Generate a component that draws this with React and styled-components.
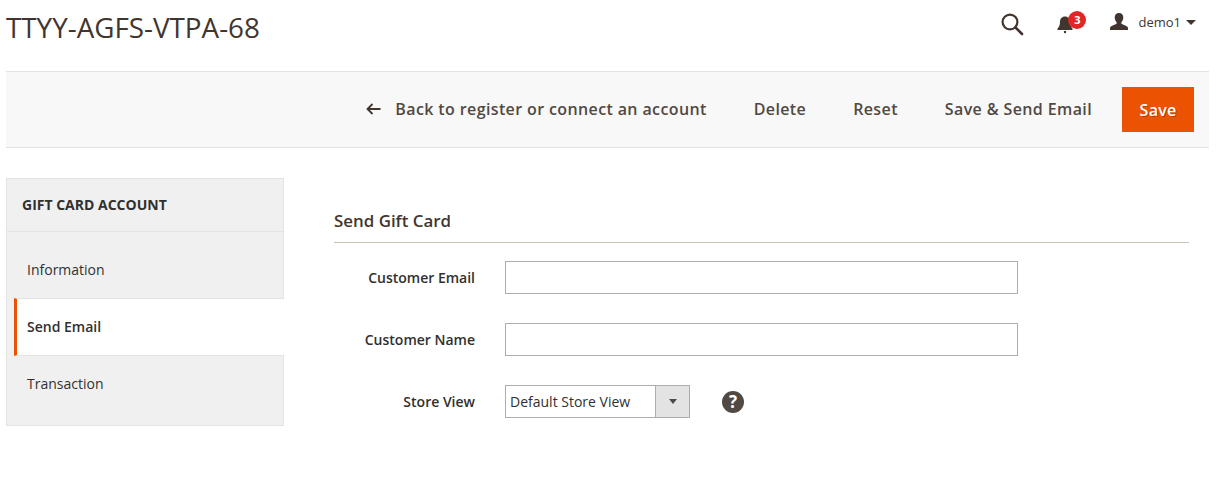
// Import Libraries
import React from 'react'
import styled, { createGlobalStyle } from 'styled-components'

// Style
const GlobalStyle = createGlobalStyle`
    html, body {
        margin: 0;
        padding: 0;
        background: #fff;
        font-family: "Open Sans", sans-serif;
        color: #41362f;
    }
    * {
        box-sizing: border-box;
    }
`

const Page = styled.div`
    width: 1229px;
    height: 490px;
    padding: 0 20px 0 6px;
    overflow: hidden;
`

const Header = styled.header`
    display: flex;
    align-items: flex-start;
    justify-content: space-between;
    height: 71px;
`

const PageTitle = styled.h1`
    margin: 7px 0 0;
    font-size: 27.8px;
    line-height: 40px;
    font-weight: 400;
    color: #41362f;
`

const HeaderActions = styled.div`
    display: flex;
    align-items: flex-start;
    padding: 12px 13px 0 0;
`

const SearchButton = styled.span`
    display: block;
    width: 24px;
    height: 24px;
    margin-right: 32px;
`

const BellButton = styled.span`
    display: block;
    position: relative;
    width: 18px;
    height: 22px;
    margin: 2px 35px 0 0;
`

const Badge = styled.span`
    position: absolute;
    top: -3px;
    left: 12px;
    width: 18px;
    height: 18px;
    border-radius: 50%;
    background: #e22626;
    color: #fff;
    font-size: 11px;
    font-weight: 700;
    line-height: 18px;
    text-align: center;
`

const UserMenu = styled.div`
    display: flex;
    align-items: center;
    height: 20px;
`

const UserName = styled.span`
    margin: 0 5px 0 9px;
    font-size: 13px;
    line-height: 20px;
    color: #41362f;
`

const Caret = styled.span`
    width: 0;
    height: 0;
    border-left: 5px solid transparent;
    border-right: 5px solid transparent;
    border-top: 5px solid #41362f;
`

const Toolbar = styled.div`
    display: flex;
    align-items: center;
    justify-content: flex-end;
    gap: 47px;
    height: 77px;
    padding-right: 15px;
    background: #f8f8f8;
    border-top: 1px solid #e3e3e3;
    border-bottom: 1px solid #e3e3e3;
`

const ToolbarLink = styled.span`
    display: flex;
    align-items: center;
    margin-bottom: 2px;
    font-size: 16px;
    font-weight: 600;
    letter-spacing: 0.38px;
    color: #514943;
`

const BackArrow = styled.svg`
    width: 15px;
    height: 12px;
    margin-right: 14px;
`

const SaveButton = styled.button`
    width: 72px;
    height: 45px;
    margin-left: -17px;
    padding: 0;
    border: 0;
    background: #eb5202;
    color: #fff;
    font-family: inherit;
    font-size: 16px;
    font-weight: 600;
    letter-spacing: 0.25px;
    text-shadow: 1px 1px 0 rgba(0, 0, 0, 0.25);
`

const Content = styled.div`
    display: flex;
    padding-top: 30px;
`

const Sidebar = styled.aside`
    flex: 0 0 278px;
    height: 248px;
    background: #f0f0f0;
    border: 1px solid #e3e3e3;
`

const SidebarTitle = styled.div`
    height: 53px;
    padding-left: 15px;
    border-bottom: 1px solid #e3e3e3;
    font-size: 14px;
    font-weight: 700;
    line-height: 52px;
    color: #303030;
`

const NavItem = styled.div`
    display: flex;
    align-items: center;
    height: ${(props) => props.$height}px;
    padding: ${(props) => props.$pad || 0}px 0 0 20px;
    font-size: 14px;
    color: #303030;
`

const ActiveNavItem = styled.div`
    display: flex;
    align-items: center;
    height: 58px;
    margin: 0 -1px 0 7px;
    padding: 0 0 2px 10px;
    background: #fff;
    border-left: 3px solid #eb5202;
    border-top: 1px solid #e3e3e3;
    border-bottom: 1px solid #e3e3e3;
    font-size: 14px;
    font-weight: 600;
    color: #303030;
`

const Main = styled.main`
    flex: 1;
    padding: 31px 20px 0 50px;
`

const SectionTitle = styled.h2`
    height: 34px;
    margin: 0 0 18px;
    border-bottom: 1px solid #cac3b4;
    font-size: 16.9px;
    font-weight: 600;
    line-height: 23px;
    color: #41362f;
`

const FormRow = styled.div`
    display: flex;
    align-items: center;
    height: 33px;
    margin-bottom: 29px;
`

const Label = styled.label`
    flex: 0 0 141px;
    margin-right: 30px;
    font-size: 14px;
    font-weight: 600;
    text-align: right;
    color: #303030;
`

const TextInput = styled.input`
    width: 513px;
    height: 33px;
    border: 1px solid #adadad;
    background: #fff;
`

const Select = styled.div`
    display: flex;
    width: 185px;
    height: 33px;
    border: 1px solid #adadad;
    background: #fff;
`

const SelectText = styled.span`
    flex: 1;
    padding-left: 4px;
    font-size: 14px;
    line-height: 31px;
    color: #303030;
`

const SelectToggle = styled.span`
    display: flex;
    align-items: center;
    justify-content: center;
    width: 34px;
    background: #e3e3e3;
    border-left: 1px solid #adadad;
`

const SelectCaret = styled(Caret)`
    border-left-width: 4px;
    border-right-width: 4px;
    border-top: 5px solid #514943;
`

const HelpIcon = styled.span`
    width: 22px;
    height: 22px;
    margin-left: 32px;
    border-radius: 50%;
    background: #514943;
    color: #fff;
    font-size: 17px;
    font-weight: 700;
    line-height: 22px;
    text-align: center;
`

// Component
export default function App() {
    return (
        <Page>
            <GlobalStyle />
            <Header>
                <PageTitle>TTYY-AGFS-VTPA-68</PageTitle>
                <HeaderActions>
                    <SearchButton>
                        <svg width="24" height="24" viewBox="0 0 24 24" fill="none" stroke="#41362f" strokeWidth="2.2">
                            <circle cx="10" cy="10" r="7.4" />
                            <path d="M15.5 15.5 L22 22" strokeLinecap="round" strokeWidth="2.6" />
                        </svg>
                    </SearchButton>
                    <BellButton>
                        <svg width="18" height="22" viewBox="0 0 18 22" fill="#41362f">
                            <path d="M9 2.5c-3.2 0-5 2.3-5 5.2 0 3.200-.8 5-2.500 6.800v1.500h15v-1.500c-1.700-1.800-2.500-3.600-2.500-6.800 0-2.900-1.800-5.200-5-5.200z" />
                            <circle cx="9" cy="18" r="1.200" />
                        </svg>
                        <Badge>3</Badge>
                    </BellButton>
                    <UserMenu>
                        <svg width="20" height="18" viewBox="0 0 20 18" fill="#41362f">
                            <path d="M10 0c2.800 0 4.300 2 4.300 4.600 0 2-.9 3.900-2.100 5 0 1 .5 1.500 2.300 2.200 2.500 1 4.500 1.700 4.500 3.200v2H1v-2c0-1.500 2-2.200 4.500-3.200 1.800-.7 2.300-1.200 2.300-2.200-1.200-1.100-2.100-3-2.100-5C5.700 2 7.200 0 10 0z" />
                        </svg>
                        <UserName>demo1</UserName>
                        <Caret />
                    </UserMenu>
                </HeaderActions>
            </Header>

            <Toolbar>
                <ToolbarLink>
                    <BackArrow viewBox="0 0 15 12" fill="none" stroke="#41362f" strokeWidth="1.800">
                        <path d="M14.500 6H1.500M6.500 1 1.500 6l5 5" />
                    </BackArrow>
                    Back to register or connect an account
                </ToolbarLink>
                <ToolbarLink>Delete</ToolbarLink>
                <ToolbarLink>Reset</ToolbarLink>
                <ToolbarLink>Save &amp; Send Email</ToolbarLink>
                <SaveButton>Save</SaveButton>
            </Toolbar>

            <Content>
                <Sidebar>
                    <SidebarTitle>GIFT CARD ACCOUNT</SidebarTitle>
                    <NavItem $height={66} $pad={8}>Information</NavItem>
                    <ActiveNavItem>Send Email</ActiveNavItem>
                    <NavItem $height={55} $pad={0}>Transaction</NavItem>
                </Sidebar>
                <Main>
                    <SectionTitle>Send Gift Card</SectionTitle>
                    <FormRow>
                        <Label>Customer Email</Label>
                        <TextInput />
                    </FormRow>
                    <FormRow>
                        <Label>Customer Name</Label>
                        <TextInput />
                    </FormRow>
                    <FormRow>
                        <Label>Store View</Label>
                        <Select>
                            <SelectText>Default Store View</SelectText>
                            <SelectToggle><SelectCaret /></SelectToggle>
                        </Select>
                        <HelpIcon>?</HelpIcon>
                    </FormRow>
                </Main>
            </Content>
        </Page>
    )
}
